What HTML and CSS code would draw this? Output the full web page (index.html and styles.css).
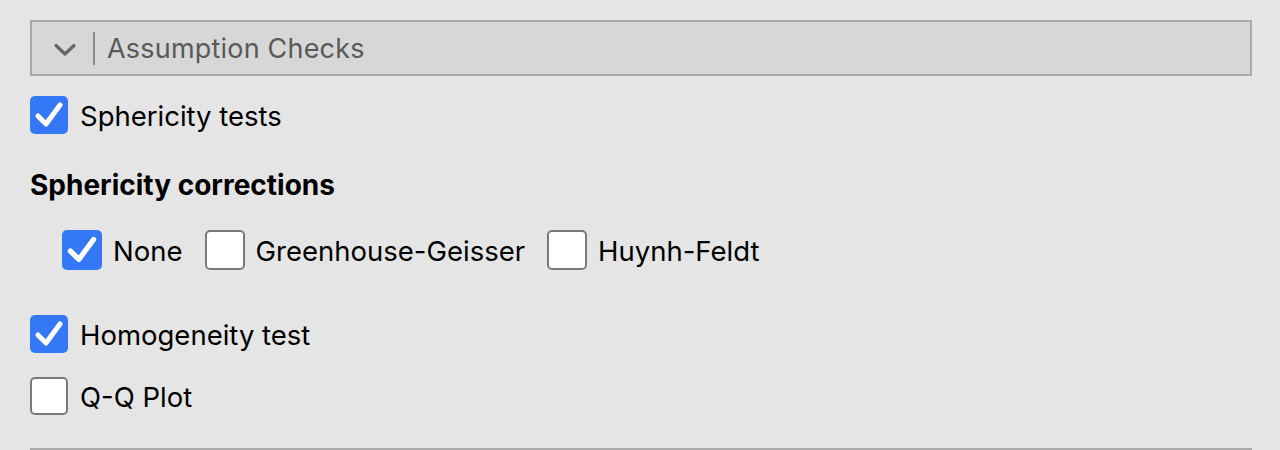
FILE: index.html
```html
<!DOCTYPE html>
<html>
<head>
<meta charset="utf-8">
<link rel="stylesheet" href="styles.css">
</head>
<body>
<div class="panel">
  <div class="header">
    <span class="chev"><svg width="24" height="14" viewBox="0 0 24 14"><path d="M3 2.5 L12 11 L21 2.5" fill="none" stroke="#666" stroke-width="3.2" stroke-linecap="round" stroke-linejoin="round"/></svg></span>
    <span class="divider"></span>
    <span class="title">Assumption Checks</span>
  </div>
  <div class="row r1"><span class="cb on"><svg viewBox="0 0 38 38"><path d="M8 20 L16 28 L30 9" fill="none" stroke="#fff" stroke-width="5" stroke-linecap="round" stroke-linejoin="round"/></svg></span><span class="lbl">Sphericity tests</span></div>
  <div class="sect">Sphericity corrections</div>
  <div class="row r2">
    <span class="cb on"><svg viewBox="0 0 38 38"><path d="M8 20 L16 28 L30 9" fill="none" stroke="#fff" stroke-width="5" stroke-linecap="round" stroke-linejoin="round"/></svg></span><span class="lbl">None</span>
    <span class="cb off g"></span><span class="lbl">Greenhouse-Geisser</span>
    <span class="cb off g"></span><span class="lbl">Huynh-Feldt</span>
  </div>
  <div class="row r3"><span class="cb on"><svg viewBox="0 0 38 38"><path d="M8 20 L16 28 L30 9" fill="none" stroke="#fff" stroke-width="5" stroke-linecap="round" stroke-linejoin="round"/></svg></span><span class="lbl">Homogeneity test</span></div>
  <div class="row r4"><span class="cb off"></span><span class="lbl">Q-Q Plot</span></div>
  <div class="bottom"></div>
</div>
</body>
</html>
```
FILE: styles.css
```css
html, body { margin: 0; padding: 0; background: #e5e5e5; }
body { font-family: Inter, "Liberation Sans", sans-serif; color: #000; overflow: hidden; height: 450px; }
.panel { padding: 20px 28px 0 30px; }
.header {
  height: 52px; border: 2px solid #aaaaaa; background: #d7d7d7;
  display: flex; align-items: center;
}
.chev { width: 24px; height: 14px; margin-left: 21px; display: flex; margin-top: 4px; }
.chev svg { display: block; }
.divider { width: 2px; height: 33px; background: #8a8a8a; margin-left: 16px; }
.title { margin-left: 12px; font-size: 27px; color: #595959; letter-spacing: 0.2px; }
.row { display: flex; align-items: center; height: 38px; }
.r1 { margin-top: 20px; }
.r2 { margin-top: 30px; padding-left: 32px; height: 40px; }
.r3 { margin-top: 45px; }
.r4 { margin-top: 24px; }
.cb { width: 38px; height: 38px; box-sizing: border-box; border-radius: 5px; flex: none; display: flex; }
.cb svg { width: 38px; height: 38px; display: block; }
.r2 .cb { width: 40px; height: 40px; }
.r2 .cb svg { width: 40px; height: 40px; }
.cb.on { background: #3478f6; }
.cb.off { background: #fff; border: 2px solid #7a7a7a; }
.lbl { font-size: 27.5px; margin-left: 12px; margin-top: 2px; }
.r2 .lbl { margin-left: 11px; margin-right: 22px; }
.sect { font-size: 28px; font-weight: 700; margin-top: 36px; line-height: 30px; }
.bottom { margin-top: 33px; height: 2px; background: #aaaaaa; }
```
